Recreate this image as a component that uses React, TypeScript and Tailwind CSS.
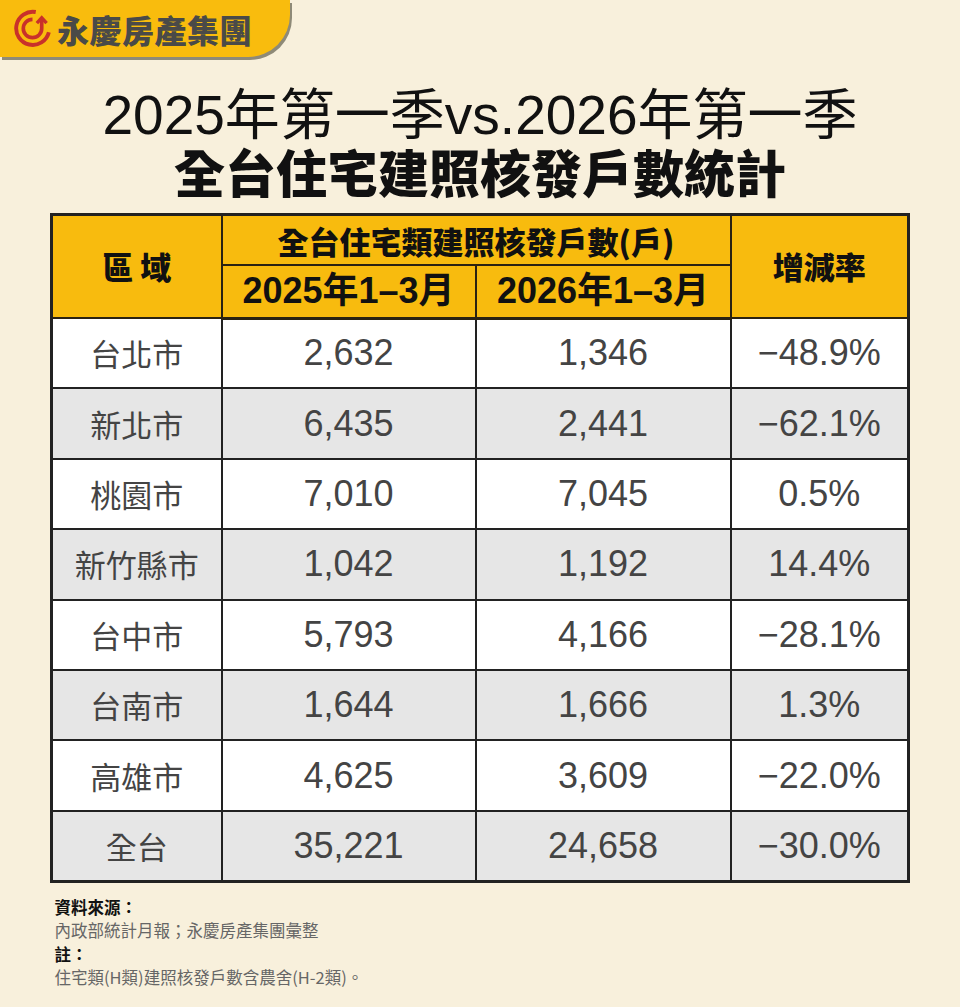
import React from "react";

const rows: [string, string, string, string][] = [
  ["台北市", "2,632", "1,346", "−48.9%"],
  ["新北市", "6,435", "2,441", "−62.1%"],
  ["桃園市", "7,010", "7,045", "0.5%"],
  ["新竹縣市", "1,042", "1,192", "14.4%"],
  ["台中市", "5,793", "4,166", "−28.1%"],
  ["台南市", "1,644", "1,666", "1.3%"],
  ["高雄市", "4,625", "3,609", "−22.0%"],
  ["全台", "35,221", "24,658", "−30.0%"],
];

function LogoIcon() {
  return (
    <svg width="39" height="39" viewBox="0 0 36 36" fill="none">
      <path
        d="M21 2.8 A15.3 15.3 0 1 0 33.1 21.5"
        stroke="#c9312a"
        strokeWidth="3.6"
        strokeLinecap="butt"
      />
      <path
        d="M18 9.5 A8.5 8.5 0 1 0 26.5 18 L26.5 10"
        stroke="#c9312a"
        strokeWidth="3.4"
        strokeLinecap="butt"
      />
      <path
        d="M22 13 L26.5 8.2 L31 13"
        stroke="#c9312a"
        strokeWidth="3.2"
        strokeLinecap="butt"
        strokeLinejoin="miter"
      />
    </svg>
  );
}

export default function App() {
  const cjk = { fontFamily: '"Noto Sans CJK TC", "Noto Sans CJK SC", sans-serif' };
  const mixed = {
    fontFamily: '"Liberation Sans", "Noto Sans CJK TC", "Noto Sans CJK SC", sans-serif',
  };
  return (
    <div className="w-[960px] h-[1007px] bg-[#f8f0dc] overflow-hidden" style={mixed}>
      {/* Logo tab */}
      <div className="w-[290px] h-[57px] bg-[#f9bc0d] rounded-br-[42px] shadow-[2px_3px_0_#8e8a78] flex items-center pl-[13px] gap-[5px]">
        <LogoIcon />
        <span
          className="text-[32px] font-black text-[#4a4a48] tracking-[0.5px] leading-none"
          style={cjk}
        >
          永慶房產集團
        </span>
      </div>

      {/* Title */}
      <div className="mt-[30px] text-center text-[#111]">
        <div className="text-[55px] leading-[57px] font-normal" style={mixed}>
          2025年第一季vs.2026年第一季
        </div>
        <div className="text-[51px] leading-[55px] font-black" style={cjk}>
          全台住宅建照核發戶數統計
        </div>
      </div>

      {/* Table */}
      <table className="mx-auto mt-[14px] w-[857px] table-fixed border-collapse border-[3px] border-[#222]">
        <colgroup>
          <col className="w-[170px]" />
          <col className="w-[254px]" />
          <col className="w-[255px]" />
          <col className="w-[178px]" />
        </colgroup>
        <thead>
          <tr className="h-[50px] bg-[#f8bb0e] text-[#111]">
            <th
              rowSpan={2}
              className="border-2 border-[#2a2212] text-[31px] font-black"
              style={cjk}
            >
              區 域
            </th>
            <th
              colSpan={2}
              className="border-2 border-[#2a2212] text-[31px] font-black leading-[46px] pt-[2px]"
              style={cjk}
            >
              全台住宅類建照核發戶數(戶)
            </th>
            <th
              rowSpan={2}
              className="border-2 border-[#2a2212] text-[31px] font-black"
              style={cjk}
            >
              增減率
            </th>
          </tr>
          <tr className="h-[53px] bg-[#f8bb0e] text-[#111]">
            <th className="border-2 border-b-[3px] border-[#2a2212] text-[36px] font-bold leading-[44px]" style={mixed}>
              2025年1–3月
            </th>
            <th className="border-2 border-b-[3px] border-[#2a2212] text-[36px] font-bold leading-[44px]" style={mixed}>
              2026年1–3月
            </th>
          </tr>
        </thead>
        <tbody>
          {rows.map((r, i) => (
            <tr
              key={r[0]}
              className={`h-[70.4px] ${i % 2 === 1 ? "bg-[#e6e6e6]" : "bg-white"} text-[#444]`}
            >
              <td className="border-2 border-[#222] text-center text-[31px] leading-[40px]" style={cjk}>
                {r[0]}
              </td>
              <td className="border-2 border-[#222] text-center text-[36px] leading-[40px]" style={mixed}>
                {r[1]}
              </td>
              <td className="border-2 border-[#222] text-center text-[36px] leading-[40px]" style={mixed}>
                {r[2]}
              </td>
              <td className="border-2 border-[#222] text-center text-[36px] leading-[40px]" style={mixed}>
                {r[3]}
              </td>
            </tr>
          ))}
        </tbody>
      </table>

      {/* Footer */}
      <div className="mx-auto w-[857px] pl-[3px] mt-[13px] text-[16.5px] leading-[23.5px]" style={cjk}>
        <div className="font-bold text-[#111]">資料來源：</div>
        <div className="text-[#666]">內政部統計月報；永慶房產集團彙整</div>
        <div className="font-bold text-[#111]">註：</div>
        <div className="text-[#666]">住宅類(H類)建照核發戶數含農舍(H-2類)。</div>
      </div>
    </div>
  );
}
